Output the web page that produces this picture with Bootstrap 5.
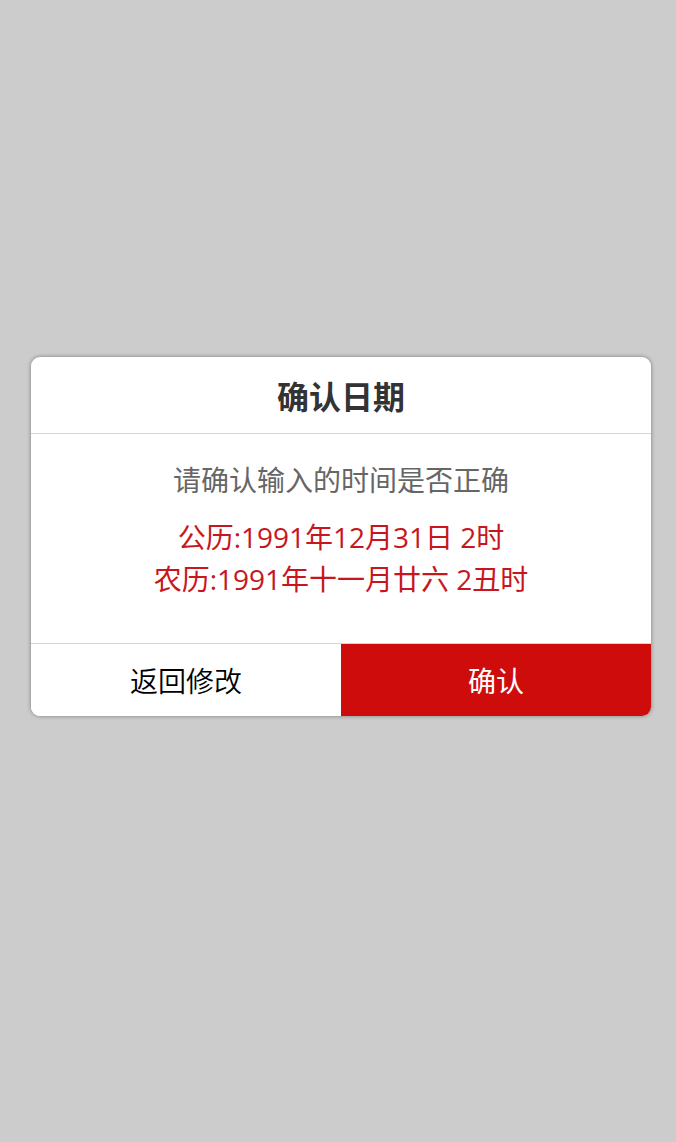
<!DOCTYPE html>
<html lang="zh-CN">
<head>
<meta charset="utf-8">
<meta name="viewport" content="width=device-width, initial-scale=1">
<title>确认日期</title>
<link href="https://cdn.jsdelivr.net/npm/bootstrap@5.3.0/dist/css/bootstrap.min.css" rel="stylesheet">
<style>
  body {
    background: #ccc;
    font-family: "Open Sans", "Noto Sans CJK SC", sans-serif;
    font-size: 28px;
    font-weight: 375;
    line-height: 42px;
  }
  .page { padding: 0 25px 69px 31px; }
  .confirm-box {
    border-radius: 9px;
    box-shadow: 0 0 4px rgba(0, 0, 0, .4);
  }
  .confirm-title { font-size: 32px; line-height: 44px; color: #333; }
  .confirm-head { padding: 18px 16px 14px; border-bottom: 1px solid #d5d5d5; }
  .confirm-body { padding: 25px 16px 43px; }
  .hint { color: #666; margin-bottom: 15px; }
  .dates { color: #c7161e; }
  .confirm-foot { border-top: 1px solid #d5d5d5; }
  .action { padding: 16px 0 14px; font-weight: 350; color: #000; background: #fff; }
  .action-ok { font-weight: 400; color: #fff; background: #cf0c0c; }
</style>
</head>
<body>
<main class="page min-vh-100 d-flex align-items-center">
  <section class="confirm-box bg-white w-100 overflow-hidden text-center" role="dialog" aria-labelledby="title">
    <header class="confirm-head">
      <h1 class="confirm-title fw-bold m-0" id="title">确认日期</h1>
    </header>
    <div class="confirm-body">
      <p class="hint">请确认输入的时间是否正确</p>
      <p class="dates mb-0">公历:1991年12月31日 2时<br>农历:1991年十一月廿六 2丑时</p>
    </div>
    <footer class="confirm-foot d-flex">
      <button type="button" class="action flex-fill w-50 border-0">返回修改</button>
      <button type="button" class="action action-ok flex-fill w-50 border-0">确认</button>
    </footer>
  </section>
</main>
<script src="https://cdn.jsdelivr.net/npm/bootstrap@5.3.0/dist/js/bootstrap.bundle.min.js"></script>
</body>
</html>
